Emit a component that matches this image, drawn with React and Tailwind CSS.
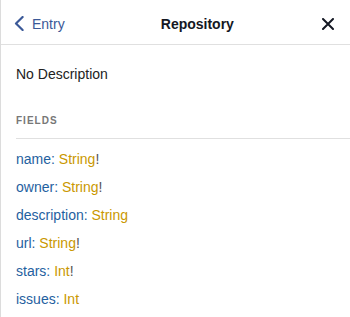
import { useState } from 'react';

const fields = [
    { name: 'name', type: 'String', required: true },
    { name: 'owner', type: 'String', required: true },
    { name: 'description', type: 'String', required: false },
    { name: 'url', type: 'String', required: true },
    { name: 'stars', type: 'Int', required: true },
    { name: 'issues', type: 'Int', required: false },
];

export default function App() {
    const [open, setOpen] = useState(true);

    return (
        <div className="min-h-screen bg-white border-l border-[#dcdcdc] text-[#141823] font-['Liberation_Sans',Arial,sans-serif] text-[14px]">
            {/* Title bar */}
            <div className="flex items-center h-[45px] pt-[3px] pl-[13px] pr-[16px] border-b border-[#e0e0e0] leading-[16px]">
                <button className="flex items-center gap-[8px] text-[#3B5998]">
                    <svg width="10" height="15" viewBox="0 0 10 15" fill="none">
                        <path d="M8.6 1 L2 7.5 L8.6 14" stroke="#3B5998" strokeWidth="2.2" strokeLinecap="round" strokeLinejoin="round" />
                    </svg>
                    <span>Entry</span>
                </button>
                <div className="flex-1 pl-[8px] text-center font-bold whitespace-nowrap">Repository</div>
                <button onClick={() => setOpen(!open)} className="flex items-center">
                    <svg width="12" height="12" viewBox="0 0 12 12">
                        <path d="M1 1 L11 11 M11 1 L1 11" stroke="#141823" strokeWidth="2" strokeLinecap="round" />
                    </svg>
                </button>
            </div>

            {/* Contents */}
            <div className="pl-[15px] pt-[21px] leading-[16px]">
                <div className="text-[#222]">No Description</div>

                <div className="mt-[33px] pb-[11px] border-b border-[#e0e0e0] text-[10px] leading-[12px] font-bold tracking-[1px] text-[#777]">
                    FIELDS
                </div>

                <div className="flex flex-col gap-[12px] pt-[12px]">
                    {fields.map((f) => (
                        <div key={f.name} className="text-[#1F61A0]">
                            <span>{f.name}: </span>
                            <span className="text-[#CA9800]">{f.type}</span>
                            {f.required && <span className="text-[#555]">!</span>}
                        </div>
                    ))}
                </div>
            </div>
        </div>
    );
}
